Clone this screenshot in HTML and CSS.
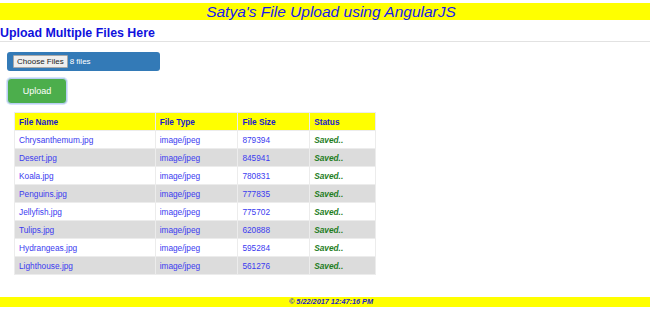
FILE: index.html
```html
<!DOCTYPE html>
<html>
<head>
<meta charset="utf-8">
<title>Satya's File Upload using AngularJS</title>
<link rel="stylesheet" href="styles.css">
</head>
<body>
<header class="banner">Satya's File Upload using AngularJS</header>
<h3 class="subtitle">Upload Multiple Files Here</h3>
<div class="content">
  <div class="file-box">
    <span class="choose-btn">Choose Files</span>
    <span class="file-count">8 files</span>
  </div>
  <button class="upload-btn">Upload</button>
  <table class="files">
    <thead>
      <tr><th class="c1">File Name</th><th class="c2">File Type</th><th class="c3">File Size</th><th class="c4">Status</th></tr>
    </thead>
    <tbody>
      <tr><td>Chrysanthemum.jpg</td><td>image/jpeg</td><td>879394</td><td class="saved">Saved..</td></tr>
      <tr><td>Desert.jpg</td><td>image/jpeg</td><td>845941</td><td class="saved">Saved..</td></tr>
      <tr><td>Koala.jpg</td><td>image/jpeg</td><td>780831</td><td class="saved">Saved..</td></tr>
      <tr><td>Penguins.jpg</td><td>image/jpeg</td><td>777835</td><td class="saved">Saved..</td></tr>
      <tr><td>Jellyfish.jpg</td><td>image/jpeg</td><td>775702</td><td class="saved">Saved..</td></tr>
      <tr><td>Tulips.jpg</td><td>image/jpeg</td><td>620888</td><td class="saved">Saved..</td></tr>
      <tr><td>Hydrangeas.jpg</td><td>image/jpeg</td><td>595284</td><td class="saved">Saved..</td></tr>
      <tr><td>Lighthouse.jpg</td><td>image/jpeg</td><td>561276</td><td class="saved">Saved..</td></tr>
    </tbody>
  </table>
</div>
<footer class="footer">© 5/22/2017 12:47:16 PM</footer>
</body>
</html>
```
FILE: styles.css
```css
html, body {
  margin: 0;
  padding: 0;
  background: #fff;
  font-family: "Liberation Sans", Arial, sans-serif;
}
.banner {
  margin-top: 3px;
  height: 17px;
  line-height: 17px;
  background: #ffff00;
  color: #1a1aee;
  font-style: italic;
  font-size: 15.5px;
  text-align: center;
  padding-left: 12px;
}
.subtitle {
  margin: 0;
  padding-top: 6px;
  height: 14px;
  line-height: 14px;
  font-size: 12.4px;
  font-weight: bold;
  color: #1010dd;
  border-bottom: 1px solid #e2e2e2;
  padding-bottom: 1px;
}
.content {
  padding: 10px 0 0 7px;
  display: flex;
  flex-direction: column;
  align-items: flex-start;
}
.file-box {
  width: 153px;
  height: 19px;
  background: #337ab7;
  border-radius: 3px;
  display: flex;
  align-items: center;
  padding-left: 6px;
  box-sizing: border-box;
  gap: 2px;
}
.choose-btn {
  background: #efefef;
  border: 1px solid #a8a8a8;
  color: #222;
  font-size: 8px;
  padding: 1px 3px;
  line-height: 9px;
  border-radius: 1px;
}
.file-count {
  color: #fff;
  font-size: 8px;
}
.upload-btn {
  margin-top: 7px;
  width: 60px;
  height: 26px;
  background: #4cae4c;
  border: 1px solid #b9cff5;
  border-radius: 4px;
  color: #fff;
  font-family: "Liberation Sans", Arial, sans-serif;
  font-size: 9px;
  padding: 0;
  box-shadow: 0 0 0 1px #d8e4fa;
}
.files {
  margin-top: 8px;
  margin-left: 7px;
  width: 362px;
  border-collapse: collapse;
  font-size: 8.3px;
  border: 1px solid #e6e6e6;
}
.files th, .files td {
  height: 18px;
  padding: 0 0 0 4px;
  text-align: left;
  border: 1px solid #ececec;
  box-sizing: border-box;
}
.files th {
  background: #ffff00;
  color: #1a1acc;
  font-weight: bold;
}
.files td {
  color: #3b3bf0;
}
.c1 { width: 141px; }
.c2 { width: 83px; }
.c3 { width: 72px; }
.c4 { width: 66px; }
.files tbody tr:nth-child(even) td {
  background: #dcdcdc;
}
.files td.saved {
  color: #1e7d1e;
  font-weight: bold;
  font-style: italic;
}
.footer {
  margin-top: 22px;
  height: 10px;
  line-height: 10px;
  background: #ffff00;
  color: #1a1acc;
  font-size: 7.3px;
  font-weight: bold;
  font-style: italic;
  text-align: center;
  padding-left: 12px;
}
```
